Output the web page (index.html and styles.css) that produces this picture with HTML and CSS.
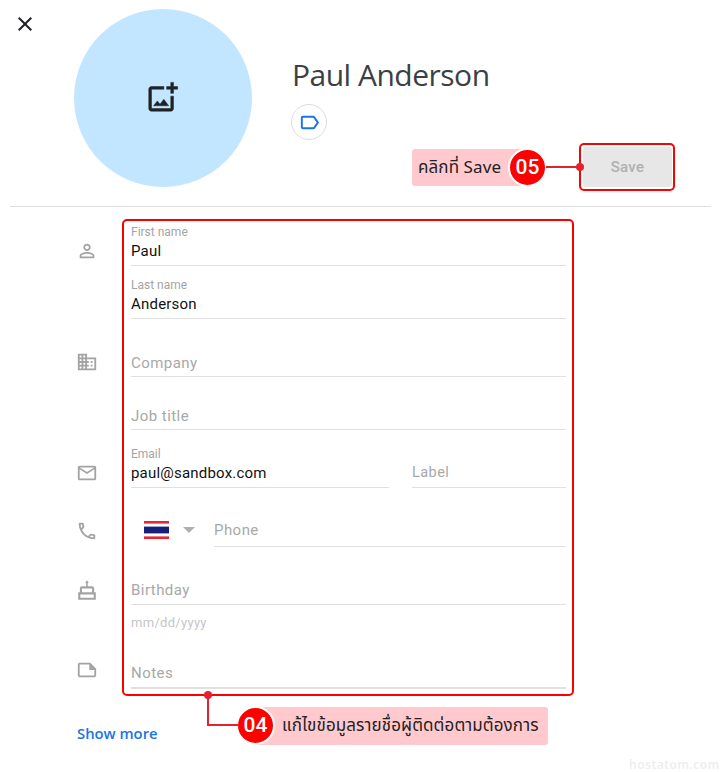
FILE: index.html
```html
<!DOCTYPE html>
<html lang="th">
<head>
<meta charset="utf-8">
<title>Edit contact</title>
<link rel="stylesheet" href="styles.css">
</head>
<body>
<div class="page">
  <header class="header">
    <button class="close" aria-label="Close">
      <svg viewBox="0 0 24 24" class="close-icon"><path d="M19 6.41L17.59 5 12 10.59 6.41 5 5 6.41 10.59 12 5 17.59 6.41 19 12 13.41 17.59 19 19 17.59 13.41 12z"/></svg>
    </button>
    <div class="avatar">
      <svg viewBox="0 0 24 24" class="avatar-icon"><path d="M18 20H4V6h9V4H4c-1.1 0-2 .9-2 2v14c0 1.1.9 2 2 2h14c1.1 0 2-.9 2-2v-9h-2v9zm-7.79-3.17l-1.96-2.36L5.5 18h11l-3.54-4.71zM20 4V1h-2v3h-3c.01.01 0 2 0 2h3v2.99c.01.01 2 0 2 0V6h3V4h-3z"/></svg>
    </div>
    <div class="identity">
      <h1 class="name">Paul Anderson</h1>
      <button class="label-btn" aria-label="Label">
        <svg viewBox="0 0 24 24" class="label-icon"><path d="M17.63 5.84C17.27 5.33 16.67 5 16 5L5 5.01C3.9 5.01 3 5.9 3 7v10c0 1.1.9 1.99 2 1.99L16 19c.67 0 1.27-.33 1.63-.84L22 12l-4.37-6.16zM16 17H5V7h11l3.55 5L16 17z"/></svg>
      </button>
      <div class="actions"><button class="save">Save</button></div>
    </div>
  </header>

  <form class="form">
    <div class="row">
      <div class="icon-col"><svg viewBox="0 0 24 24" class="icon icon-name"><path d="M12 5.9c1.16 0 2.1.94 2.1 2.1s-.94 2.1-2.1 2.1S9.9 9.16 9.9 8s.94-2.1 2.1-2.1m0 9c2.97 0 6.1 1.46 6.1 2.1v1.1H5.9V17c0-.64 3.13-2.1 6.1-2.1M12 4C9.79 4 8 5.79 8 8s1.79 4 4 4 4-1.79 4-4-1.79-4-4-4zm0 9c-2.67 0-8 1.34-8 4v3h16v-3c0-2.66-5.33-4-8-4z"/></svg></div>
      <div class="fields">
        <div class="field"><span class="label">First name</span><span class="value">Paul</span></div>
        <div class="field gap-s"><span class="label">Last name</span><span class="value">Anderson</span></div>
      </div>
    </div>
    <div class="row gap-m">
      <div class="icon-col"><svg viewBox="0 0 24 24" class="icon icon-company"><path d="M12 7V3H2v18h20V7H12zM6 19H4v-2h2v2zm0-4H4v-2h2v2zm0-4H4V9h2v2zm0-4H4V5h2v2zm4 12H8v-2h2v2zm0-4H8v-2h2v2zm0-4H8V9h2v2zm0-4H8V5h2v2zm10 12h-8v-2h2v-2h-2v-2h2v-2h-2V9h8v10zm-2-8h-2v2h2v-2zm0 4h-2v2h2v-2z"/></svg></div>
      <div class="fields">
        <div class="field field-plain"><span class="placeholder">Company</span></div>
        <div class="field field-plain gap-s"><span class="placeholder">Job title</span></div>
      </div>
    </div>
    <div class="row gap-m">
      <div class="icon-col"><svg viewBox="0 0 24 24" class="icon icon-mail"><path d="M22 6c0-1.1-.9-2-2-2H4c-1.1 0-2 .9-2 2v12c0 1.1.9 2 2 2h16c1.1 0 2-.9 2-2V6zm-2 0l-8 5-8-5h16zm0 12H4V8l8 5 8-5v10z"/></svg></div>
      <div class="fields fields-split">
        <div class="field field-email"><span class="label">Email</span><span class="value">paul@sandbox.com</span></div>
        <div class="field field-type"><span class="placeholder placeholder-small">Label</span></div>
      </div>
    </div>
    <div class="row gap-l">
      <div class="icon-col"><svg viewBox="0 0 24 24" class="icon icon-phone"><path d="M6.54 5c.06.89.21 1.76.45 2.59l-1.2 1.2c-.41-1.2-.67-2.47-.76-3.79h1.51m9.86 12.02c.85.24 1.72.39 2.6.45v1.49c-1.32-.09-2.59-.35-3.8-.75l1.2-1.19M7.5 3H4c-.55 0-1 .45-1 1 0 9.39 7.61 17 17 17 .55 0 1-.45 1-1v-3.49c0-.55-.45-1-1-1-1.24 0-2.45-.2-3.57-.57-.1-.04-.21-.05-.31-.05-.26 0-.51.1-.71.29l-2.2 2.2c-2.83-1.45-5.15-3.76-6.59-6.59l2.2-2.2c.28-.28.36-.67.25-1.02C8.7 6.45 8.5 5.25 8.5 4c0-.55-.45-1-1-1z"/></svg></div>
      <div class="fields fields-phone">
        <div class="country">
          <svg viewBox="0 0 25 18" class="flag"><rect width="25" height="18" fill="#fff"/><rect width="25" height="2.6" fill="#ee2436"/><rect y="15.4" width="25" height="2.6" fill="#ee2436"/><rect y="5.6" width="25" height="6.8" fill="#141f78"/></svg>
          <span class="caret"></span>
        </div>
        <div class="field field-phone"><span class="placeholder">Phone</span></div>
      </div>
    </div>
    <div class="row gap-s">
      <div class="icon-col"><svg viewBox="2 2.1 20 20" class="icon icon-cake"><path d="M12 3.2l1.7 2.6h-1v3h3.8a2 2 0 0 1 2 2v3.4H20V21H4v-6.800h1.500V10.800a2 2 0 0 1 2-2h3.800v-3h-1zM7.400 10.700v3.500h9.200v-3.500zM5.900 16.100v3h12.200v-3z"/></svg></div>
      <div class="fields">
        <div class="field field-birthday"><span class="placeholder">Birthday</span></div>
        <div class="hint">mm/dd/yyyy</div>
      </div>
    </div>
    <div class="row">
      <div class="icon-col"><svg viewBox="0 0 24 24" class="icon icon-notes"><path d="M4 4h11.500L22 10.500V18a2 2 0 0 1-2 2H4a2 2 0 0 1-2-2V6a2 2 0 0 1 2-2zm0 2v12h16v-6h-5.500V6z"/></svg></div>
      <div class="fields">
        <div class="field field-notes"><span class="placeholder">Notes</span></div>
      </div>
    </div>
    <a class="more">Show more</a>
  </form>

  <div class="outline outline-form"></div>
  <div class="outline outline-save"></div>

  <div class="callout callout-save">
    <span class="callout-text">คลิกที่ Save</span>
    <span class="badge badge-right">05</span>
  </div>
  <span class="wire wire-save"></span>
  <span class="dot dot-save"></span>

  <div class="callout callout-form">
    <span class="badge badge-left">04</span>
    <span class="callout-text">แก้ไขข้อมูลรายชื่อผู้ติดต่อตามต้องการ</span>
  </div>
  <span class="wire wire-form-v"></span>
  <span class="wire wire-form-h"></span>
  <span class="dot dot-form"></span>

  <div class="watermark">hostatom.com</div>
</div>
</body>
</html>
```

FILE: styles.css
```css
* { box-sizing: border-box; }
html, body { margin: 0; padding: 0; background: #fff; }
body { font-family: Roboto, "Noto Sans", sans-serif; color: #202124; }
button { font: inherit; border: 0; background: none; padding: 0; }

.page { position: relative; width: 720px; height: 772px; overflow: hidden; }

/* header */
.header { display: flex; height: 197px; margin: 0 9px 0 10px; padding-top: 9px; box-sizing: content-box; border-bottom: 1px solid #dedede; }
.close { width: 64px; height: 32px; padding: 3px 0 0 3px; display: flex; align-items: flex-start; }
.close-icon { display: block; width: 24px; height: 24px; fill: #202124; }
.avatar { width: 178px; height: 178px; border-radius: 50%; background: #c2e6ff; display: flex; align-items: center; justify-content: center; }
.avatar-icon { width: 33px; height: 33px; fill: #202124; stroke: #202124; stroke-width: .35; margin: 0 1px 2px 0; }
.identity { flex: 1; padding-left: 40px; display: flex; flex-direction: column; align-items: flex-start; }
.name { margin: 45px 0 0; font-family: "Open Sans", Roboto, sans-serif; font-weight: 400; font-size: 30px; line-height: 42px; letter-spacing: -.5px; color: #3c4043; white-space: nowrap; }
.label-btn { margin: 8px 0 0 -1px; width: 36px; height: 36px; border-radius: 50%; border: 1px solid #dadce0; display: flex; align-items: center; justify-content: center; }
.label-icon { width: 23px; height: 23px; fill: #1a73e8; flex: none; }
.actions { align-self: stretch; display: flex; justify-content: flex-end; margin-top: 7px; padding-right: 39px; }
.save { width: 89px; height: 40px; border-radius: 3px; background: #e6e7e6; color: #b0b0b0; font-size: 15px; font-weight: 500; letter-spacing: .3px; }

/* form */
.form { padding-top: 15px; }
.row { display: flex; }
.gap-s { margin-top: 9px; }
.gap-m { margin-top: 14px; }
.gap-l { margin-top: 15px; }
.row.gap-s { margin-top: 14px; }
.icon-col { width: 131px; flex: none; padding-left: 76px; }
.icon { display: block; width: 22px; height: 22px; fill: #a3a3a3; }
.icon-name, .icon-company, .icon-mail, .icon-cake { margin-top: 18px; }
.icon-phone { margin-top: 17px; }
.icon-notes { margin-top: 14px; }
.fields { width: 435px; }
.fields-split { display: flex; gap: 23px; }
.fields-phone { display: flex; }
.field { height: 44px; border-bottom: 1px solid #e0e0e0; display: flex; flex-direction: column; justify-content: flex-end; padding-bottom: 4px; }
.field-plain { padding-bottom: 3px; }
.field-birthday { padding-bottom: 4px; }
.field-email { width: 258px; }
.field-type { flex: 1; }
.field-phone { flex: 1; padding-bottom: 6px; }
.field-notes { border-bottom-width: 2px; padding-bottom: 4px; }
.label { font-size: 12px; line-height: 14px; color: #a4a4a4; margin-bottom: 2px; }
.value { font-size: 15px; line-height: 20px; color: #111; letter-spacing: .2px; }
.placeholder { font-size: 15px; line-height: 20px; color: #a8a8a8; letter-spacing: .45px; }
.placeholder-small { font-size: 14.5px; }
.country { width: 83px; flex: none; height: 44px; padding: 18px 0 0 13px; display: flex; align-items: flex-start; gap: 14px; }
.flag { width: 25px; height: 18px; display: block; }
.caret { width: 0; height: 0; margin-top: 6px; border-left: 6.5px solid transparent; border-right: 6.5px solid transparent; border-top: 6.5px solid #b0b0b0; }
.hint { height: 40px; padding-top: 9px; font-size: 13px; line-height: 18px; letter-spacing: .3px; color: #c6c6c6; }
.more { display: block; margin: 34px 0 0 77px; font-family: "Open Sans", Roboto, sans-serif; font-size: 14.8px; font-weight: 600; line-height: 20px; color: #1a73e8; }

/* annotations laid over the page */
.outline { position: absolute; border: 2px solid #f00; border-radius: 5px; }
.outline-form { left: 122px; top: 219px; width: 452px; height: 477px; }
.outline-save { left: 579px; top: 143px; width: 96px; height: 48px; }
.callout { position: absolute; display: flex; align-items: center; background: #ffc9ce; border-radius: 3px; font-family: "Noto Sans", "Noto Sans Thai", "Liberation Sans", sans-serif; font-size: 17px; letter-spacing: .1px; color: #222; white-space: nowrap; }
.callout-save { left: 412px; top: 149px; width: 115px; height: 37px; padding-left: 6px; }
.callout-form { left: 256px; top: 707px; width: 292px; height: 38px; padding-left: 26px; }
.badge { position: absolute; width: 39px; height: 39px; border-radius: 50%; background: #f00; border: 2px solid #fff; color: #fff; font-family: Roboto, sans-serif; font-size: 21px; font-weight: 500; line-height: 35px; letter-spacing: 0; text-align: center; }
.badge-right { right: -20px; top: -1px; }
.badge-left { left: -20px; top: -1px; }
.wire { position: absolute; background: #e2232f; }
.wire-save { left: 546px; top: 166px; width: 34px; height: 2px; }
.wire-form-v { left: 207px; top: 695px; width: 2px; height: 31px; }
.wire-form-h { left: 207px; top: 724px; width: 32px; height: 2px; }
.dot { position: absolute; width: 8px; height: 8px; border-radius: 50%; background: #e2232f; }
.dot-save { left: 576px; top: 163px; }
.dot-form { left: 204px; top: 691px; }
.watermark { position: absolute; left: 629px; top: 757px; font-family: "Open Sans", sans-serif; font-size: 12px; line-height: 16px; letter-spacing: .55px; color: #ededed; font-weight: 600; white-space: nowrap; }
```
